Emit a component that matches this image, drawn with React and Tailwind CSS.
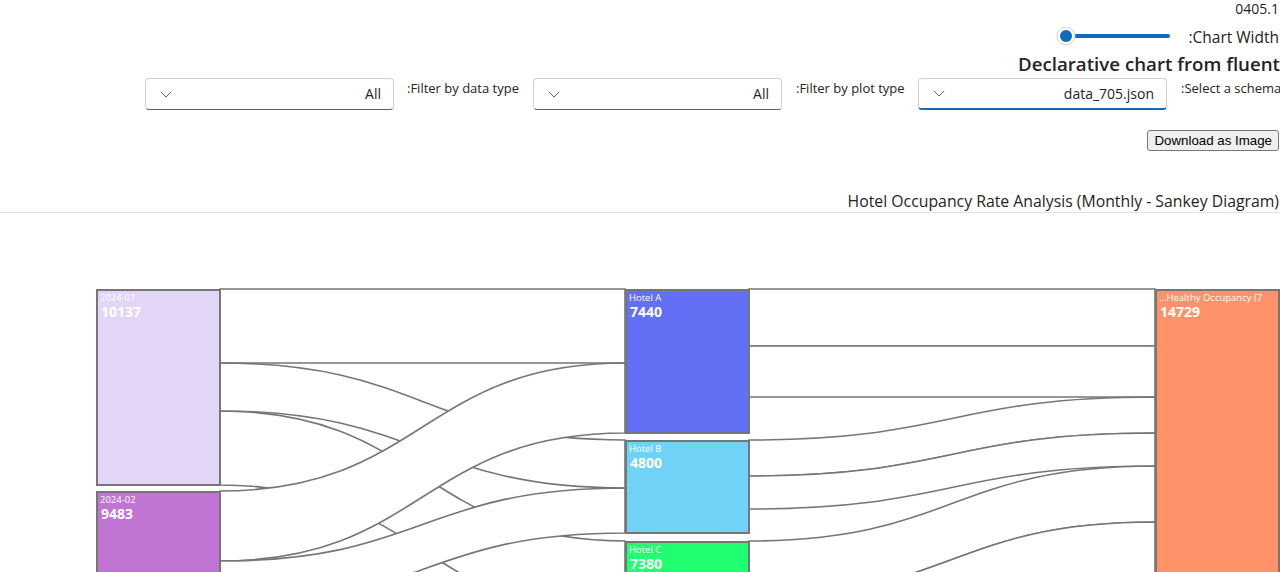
import React from "react";

const FONT = { fontFamily: '"Open Sans", "Noto Sans", sans-serif' };

function Chevron() {
  return (
    <svg width="12" height="7" viewBox="0 0 12 7" className="shrink-0">
      <path d="M0.8 0.8 L6 6 L11.2 0.8" fill="none" stroke="#616161" strokeWidth="1" />
    </svg>
  );
}

function Dropdown({ value, active }) {
  return (
    <div
      className={
        active
          ? "w-[249px] h-[32px] shrink-0 rounded-[4px] border border-[#d1d1d1] border-b-2 border-b-[#0f6cbd] bg-white flex items-center justify-between pl-[14px] pr-[12px]"
          : "w-[249px] h-[32px] shrink-0 rounded-[4px] border border-[#d1d1d1] border-b-[#616161] bg-white flex items-center justify-between pl-[14px] pr-[12px]"
      }
    >
      <Chevron />
      <span className="text-[14px] leading-[20px] text-[#242424]">{value}</span>
    </div>
  );
}

function band(l) {
  const [x0, a0, b0, x1, a1, b1] = l;
  const xm = (x0 + x1) / 2;
  return `M${x0} ${a0} C${xm} ${a0} ${xm} ${a1} ${x1} ${a1} L${x1} ${b1} C${xm} ${b1} ${xm} ${b0} ${x0} ${b0} Z`;
}

const links = [
  [220, 289, 363, 625, 289, 363],
  [220, 363, 411, 625, 440, 488],
  [220, 411, 485, 625, 541, 615],
  [220, 491, 561, 625, 363, 433],
  [220, 561, 606, 625, 488, 533],
  [220, 606, 674, 625, 615, 683],
  [749, 289, 346, 1155, 289, 346],
  [749, 346, 397, 1155, 346, 397],
  [749, 440, 476, 1155, 397, 433],
  [749, 476, 509, 1155, 433, 466],
  [749, 541, 597, 1155, 466, 522],
  [749, 597, 684, 1155, 522, 609],
];

const nodes = [
  { x: 97, y: 290, h: 195, fill: "#e2d5f5", label: "2024-01", value: "10137" },
  { x: 97, y: 492, h: 182, fill: "#c074d4", label: "2024-02", value: "9483" },
  { x: 626, y: 290, h: 143, fill: "#6370f6", label: "Hotel A", value: "7440" },
  { x: 626, y: 441, h: 92, fill: "#70d2f7", label: "Hotel B", value: "4800" },
  { x: 626, y: 542, h: 142, fill: "#20ff72", label: "Hotel C", value: "7380" },
  { x: 1156, y: 290, h: 284, fill: "#ff9268", label: "...Healthy Occupancy (7", value: "14729" },
];

export default function App() {
  return (
    <div className="w-[1280px] h-[572px] overflow-hidden bg-white text-[#242424]" style={FONT}>
      <div className="flex flex-col items-end">
        <div className="h-[17px] text-[14px] leading-[17px] pr-[1px]">0405.1</div>
        <div className="mt-[10px] h-[20px] flex items-center gap-[16px]">
          <svg width="116" height="20" viewBox="0 0 116 20">
            <line x1="12" y1="9" x2="112" y2="9" stroke="#0f6cbd" strokeWidth="4" strokeLinecap="round" />
            <circle cx="10" cy="9" r="9" fill="#ffffff" stroke="#d1d1d1" strokeWidth="1" />
            <circle cx="10" cy="9" r="6" fill="#0f6cbd" />
          </svg>
          <div className="text-[15.5px] leading-[20px] pr-[1px]">:Chart Width</div>
        </div>
        <div className="mt-[4px] text-[18.7px] leading-[26px] font-semibold">Declarative chart from fluent</div>
        <div className="mt-[1px] flex items-start">
          <Dropdown value="All" />
          <div className="w-[139px] shrink-0 pl-[13px] text-[13px] leading-[20px] whitespace-nowrap">:Filter by data type</div>
          <Dropdown value="All" />
          <div className="w-[136px] shrink-0 pl-[14px] text-[13px] leading-[20px] whitespace-nowrap">:Filter by plot type</div>
          <Dropdown value="data_705.json" active />
          <div className="w-[113px] shrink-0 pl-[14px] text-[13px] leading-[20px] whitespace-nowrap">:Select a schema</div>
        </div>
        <button
          className="mt-[20px] mr-[1px] h-[21px] px-[6px] rounded-[3px] border border-[#767676] bg-[#efefef] text-[13.3px] leading-[17px] text-black"
          style={{ fontFamily: '"Liberation Sans", Arial, sans-serif' }}
        >
          Download as Image
        </button>
        <div className="w-full mt-[40px] border-b border-[#e1e1e1] flex justify-end">
          <div className="text-[15.8px] leading-[20px] font-medium pb-[1px] pr-[1px]">
            Hotel Occupancy Rate Analysis (Monthly - Sankey Diagram)
          </div>
        </div>
      </div>
      <svg width="1280" height="360" viewBox="0 213 1280 360" className="block">
        {links.map((l, i) => (
          <path key={i} d={band(l)} fill="#ffffff" stroke="#767676" strokeWidth="1.6" />
        ))}
        {nodes.map((n, i) => (
          <g key={i}>
            <rect x={n.x} y={n.y} width="123" height={n.h} fill={n.fill} stroke="#767676" strokeWidth="2" />
            <text x={n.x + 3} y={n.y + 11} fontSize="9.5" fill="#ffffff" style={FONT}>
              {n.label}
            </text>
            <text x={n.x + 4} y={n.y + 27} fontSize="14" fontWeight="700" fill="#ffffff" style={FONT}>
              {n.value}
            </text>
          </g>
        ))}
      </svg>
    </div>
  );
}
